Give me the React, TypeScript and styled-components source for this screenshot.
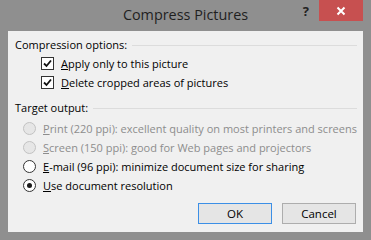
import React from "react";
import styled, { createGlobalStyle } from "styled-components";

const GlobalStyle = createGlobalStyle`
  html, body {
    margin: 0;
    padding: 0;
    background: #8f8f8f;
  }
  body {
    font-family: "Open Sans", "Noto Sans", "Liberation Sans", sans-serif;
  }
`;

const CheckIcon = () => (
  <svg width="9" height="9" viewBox="0 0 9 9">
    <path d="M1 4.5 L3.5 7 L8 1.5" fill="none" stroke="#111" strokeWidth="1.8" />
  </svg>
);

const Checkbox = ({ label }: { label: string }) => (
  <OptionRow>
    <CheckBox>
      <CheckIcon />
    </CheckBox>
    <Label>
      <u>{label[0]}</u>
      {label.slice(1)}
    </Label>
  </OptionRow>
);

const Radio = ({
  label,
  disabled,
  selected,
}: {
  label: string;
  disabled?: boolean;
  selected?: boolean;
}) => (
  <OptionRow>
    <RadioCircle $disabled={disabled}>{selected && <RadioDot />}</RadioCircle>
    <Label $disabled={disabled}>
      <u>{label[0]}</u>
      {label.slice(1)}
    </Label>
  </OptionRow>
);

const App = () => {
  return (
    <>
      <GlobalStyle />
      <Window>
        <TitleBar>
          <Title>Compress Pictures</Title>
          <HelpButton>?</HelpButton>
          <CloseButton>
            <svg width="10" height="10" viewBox="0 0 10 10">
              <path d="M1.5 1.5 L8.5 8.5 M8.5 1.5 L1.5 8.5" stroke="#fff" strokeWidth="2" />
            </svg>
          </CloseButton>
        </TitleBar>
        <Client>
          <GroupHeader>
            <span>Compression options:</span>
            <Rule />
          </GroupHeader>
          <CheckList>
            <Checkbox label="Apply only to this picture" />
            <Checkbox label="Delete cropped areas of pictures" />
          </CheckList>
          <GroupHeader $top={8}>
            <span>Target output:</span>
            <Rule />
          </GroupHeader>
          <RadioList>
            <Radio disabled label="Print (220 ppi): excellent quality on most printers and screens" />
            <Radio disabled label="Screen (150 ppi): good for Web pages and projectors" />
            <Radio label="E-mail (96 ppi): minimize document size for sharing" />
            <Radio selected label="Use document resolution" />
          </RadioList>
          <ButtonBar>
            <DialogButton $default>OK</DialogButton>
            <DialogButton>Cancel</DialogButton>
          </ButtonBar>
        </Client>
      </Window>
    </>
  );
};

export default App;

const Window = styled.div`
  width: 371px;
  height: 240px;
  background: #8f8f8f;
  display: flex;
  flex-direction: column;
  box-sizing: border-box;
  padding: 0 8px 8px 8px;
`;

const TitleBar = styled.div`
  height: 31px;
  position: relative;
  display: flex;
  align-items: flex-start;
  justify-content: center;
`;

const Title = styled.div`
  font-size: 14.4px;
  line-height: 20px;
  margin-top: 5px;
  color: #1f1f1f;
`;

const HelpButton = styled.div`
  position: absolute;
  right: 54px;
  top: 3px;
  font-size: 13px;
  font-weight: bold;
  color: #222;
  line-height: 16px;
`;

const CloseButton = styled.div`
  position: absolute;
  right: 0;
  top: 0;
  width: 44px;
  height: 21px;
  background: #c75050;
  display: flex;
  align-items: center;
  justify-content: center;
`;

const Client = styled.div`
  flex: 1;
  background: #f0f0f0;
  padding: 6px 6px 0 7px;
  font-size: 11px;
  color: #000;
  display: flex;
  flex-direction: column;
`;

const GroupHeader = styled.div<{ $top?: number }>`
  display: flex;
  align-items: center;
  height: 16px;
  line-height: 16px;
  margin-top: ${(p) => p.$top ?? 0}px;
`;

const Rule = styled.div`
  flex: 1;
  height: 1px;
  background: #dcdcdc;
  margin-left: 5px;
`;

const CheckList = styled.div`
  display: flex;
  flex-direction: column;
  padding-left: 26px;
  margin-top: 1px;
`;

const RadioList = styled.div`
  display: flex;
  flex-direction: column;
  padding-left: 8px;
  margin-top: 3px;
`;

const OptionRow = styled.div`
  display: flex;
  align-items: center;
  height: 19px;
`;

const CheckBox = styled.div`
  flex-shrink: 0;
  width: 11px;
  height: 11px;
  border: 1px solid #333;
  background: #fff;
  display: flex;
  align-items: center;
  justify-content: center;
  margin-right: 7px;
`;

const RadioCircle = styled.div<{ $disabled?: boolean }>`
  flex-shrink: 0;
  width: 11px;
  height: 11px;
  border-radius: 50%;
  border: 1px solid ${(p) => (p.$disabled ? "#c2c2c2" : "#333")};
  background: ${(p) => (p.$disabled ? "#e6e6e6" : "#fff")};
  display: flex;
  align-items: center;
  justify-content: center;
  margin-right: 7px;
`;

const RadioDot = styled.div`
  width: 5px;
  height: 5px;
  border-radius: 50%;
  background: #1a1a1a;
`;

const Label = styled.span<{ $disabled?: boolean }>`
  color: ${(p) => (p.$disabled ? "#8d8d8d" : "#000")};
  line-height: 16px;
  white-space: nowrap;
`;

const ButtonBar = styled.div`
  display: flex;
  justify-content: flex-end;
  gap: 10px;
  margin-top: 8px;
  padding-right: 1px;
`;

const DialogButton = styled.button<{ $default?: boolean }>`
  width: 74px;
  height: 21px;
  box-sizing: border-box;
  border: 1px solid ${(p) => (p.$default ? "#3c8fe6" : "#adadad")};
  background: #e5e5e5;
  font-family: inherit;
  font-size: 11.5px;
  color: #000;
  padding: 0;
`;
